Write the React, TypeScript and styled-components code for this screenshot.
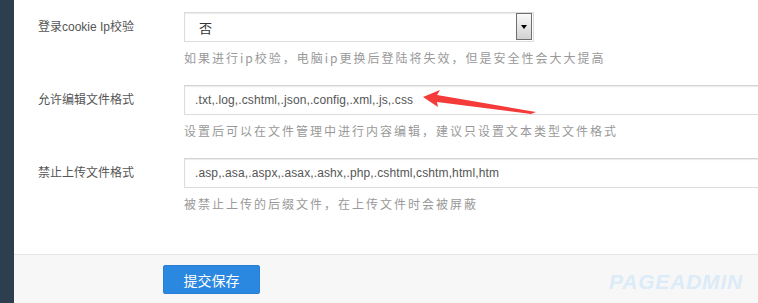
import React from "react";
import styled, { createGlobalStyle } from "styled-components";

const GlobalStyle = createGlobalStyle`
  html, body { margin: 0; padding: 0; background: #fff; }
  body { font-family: "Liberation Sans", "Noto Sans CJK SC", sans-serif; }
  * { box-sizing: border-box; }
`;

const Page = styled.div`
  position: relative;
  display: flex;
  width: 758px;
  height: 303px;
  overflow: hidden;
`;

const Sidebar = styled.div`
  width: 14px;
  flex: 0 0 14px;
  background: #2d3e4f;
`;

const Main = styled.div`
  flex: 1;
  display: flex;
  flex-direction: column;
  min-width: 0;
`;

const Form = styled.div`
  padding: 12px 0 23px 0;
`;

const Row = styled.div`
  display: grid;
  grid-template-columns: 146px 1fr;
  height: 73px;
  padding-left: 24px;
`;

const Label = styled.div`
  font-family: "Liberation Sans", "Noto Sans CJK SC", sans-serif;
  font-size: 12px;
  line-height: 30px;
  color: #555;
  white-space: nowrap;
`;

const Field = styled.div`
  display: flex;
  flex-direction: column;
  min-width: 0;
`;

const SelectBox = styled.div`
  width: 350px;
  height: 30px;
  border: 1px solid #dcdcdc;
  box-shadow: inset 0 1px 1px rgba(0, 0, 0, 0.08);
  display: flex;
  align-items: center;
  justify-content: space-between;
  padding: 1px 1px 1px 14px;
  font-family: "Noto Sans CJK SC", sans-serif;
  font-size: 13px;
  color: #333;
`;

const ArrowButton = styled.div`
  width: 16px;
  height: 27px;
  margin-top: -1px;
  border: 1px solid #6f6f6f;
  background: linear-gradient(#fafafa, #d2d2d2);
  display: flex;
  align-items: center;
  justify-content: center;
  &::after {
    content: "";
    display: block;
    border-left: 3px solid transparent;
    border-right: 3px solid transparent;
    border-top: 4px solid #000;
  }
`;

const TextInput = styled.div`
  width: 620px;
  height: 30px;
  border: 1px solid #dcdcdc;
  border-top-color: #d4d4d4;
  box-shadow: inset 0 1px 1px rgba(0, 0, 0, 0.08);
  padding: 0 10px;
  display: flex;
  align-items: center;
  font-family: "Liberation Sans", Arial, sans-serif;
  font-size: 12px;
  letter-spacing: 0.12px;
  color: #555;
  white-space: nowrap;
`;

const Help = styled.div`
  margin-top: 8px;
  font-family: "Noto Sans CJK SC", sans-serif;
  font-size: 12px;
  line-height: 16px;
  letter-spacing: 2px;
  color: #999;
  white-space: nowrap;
`;

const Footer = styled.div`
  flex: 1;
  background: #f7f7f7;
  border-top: 1px solid #e6e6e6;
  display: flex;
  align-items: flex-start;
  padding: 10px 15px 0 149px;
`;

const SubmitButton = styled.button`
  width: 97px;
  height: 29px;
  background: #2b88e0;
  border: 1px solid #2a7fd2;
  border-radius: 2px;
  color: #fff;
  font-family: "Noto Sans CJK SC", sans-serif;
  font-size: 14px;
  padding: 0;
  cursor: pointer;
`;

const Watermark = styled.div`
  margin-left: auto;
  margin-top: 6px;
  font-family: "Liberation Sans", Arial, sans-serif;
  font-weight: bold;
  font-style: italic;
  font-size: 21px;
  line-height: 22px;
  letter-spacing: 0.8px;
  color: #dcebf8;
`;

const Overlay = styled.svg`
  position: absolute;
  left: 0;
  top: 0;
  pointer-events: none;
`;

export default function App() {
  return (
    <>
      <GlobalStyle />
      <Page>
        <Sidebar />
        <Main>
          <Form>
            <Row>
              <Label>登录cookie Ip校验</Label>
              <Field>
                <SelectBox>
                  <span>否</span>
                  <ArrowButton />
                </SelectBox>
                <Help>如果进行ip校验，电脑ip更换后登陆将失效，但是安全性会大大提高</Help>
              </Field>
            </Row>
            <Row>
              <Label>允许编辑文件格式</Label>
              <Field>
                <TextInput>.txt,.log,.cshtml,.json,.config,.xml,.js,.css</TextInput>
                <Help>设置后可以在文件管理中进行内容编辑，建议只设置文本类型文件格式</Help>
              </Field>
            </Row>
            <Row>
              <Label>禁止上传文件格式</Label>
              <Field>
                <TextInput>.asp,.asa,.aspx,.asax,.ashx,.php,.cshtml,cshtm,html,htm</TextInput>
                <Help>被禁止上传的后缀文件，在上传文件时会被屏蔽</Help>
              </Field>
            </Row>
          </Form>
          <Footer>
            <SubmitButton>提交保存</SubmitButton>
            <Watermark>PAGEADMIN</Watermark>
          </Footer>
        </Main>
        <Overlay width="758" height="303" viewBox="0 0 758 303">
          <polygon
            points="423,97 440,90 437,95 536,112 531,114 437,102 438,107"
            fill="#f53a3a"
          />
        </Overlay>
      </Page>
    </>
  );
}
